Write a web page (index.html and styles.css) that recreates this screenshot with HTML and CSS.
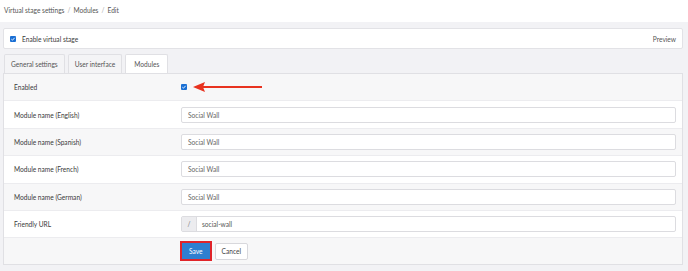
FILE: index.html
```html
<!DOCTYPE html>
<html lang="en">
<head>
  <meta charset="UTF-8">
  <title>Virtual stage settings - Modules - Edit</title>
  <link rel="stylesheet" href="styles.css">
</head>
<body>

  <div class="topbar">
    <span>Virtual stage settings</span><span class="sep">/</span><span>Modules</span><span class="sep">/</span><span>Edit</span>
  </div>

  <div class="main">
    <div class="stage-card">
      <label class="stage-toggle">
        <span class="check big"><svg viewBox="0 0 8 8"><path d="M1.8 4.2 L3.3 5.6 L6.2 2.4" fill="none" stroke="#fff" stroke-width="1.2"/></svg></span>
        Enable virtual stage
      </label>
      <span class="preview">Preview</span>
    </div>

    <div class="tabs">
      <div class="tab">General settings</div>
      <div class="tab">User interface</div>
      <div class="tab active">Modules</div>
    </div>

    <div class="panel">
      <div class="row">
        <div class="label">Enabled</div>
        <div class="field">
          <span class="check"><svg viewBox="0 0 8 8"><path d="M1.8 4.2 L3.3 5.6 L6.2 2.4" fill="none" stroke="#fff" stroke-width="1.2"/></svg></span>
          <svg class="arrow" width="72" height="12" viewBox="0 0 72 12">
            <path d="M10 6 H70" stroke="#e8321f" stroke-width="2"/>
            <path d="M1 6 L13 1 L11 6 L13 11 Z" fill="#e8321f"/>
          </svg>
        </div>
      </div>
      <div class="row">
        <div class="label">Module name (English)</div>
        <div class="field"><div class="input">Social Wall</div></div>
      </div>
      <div class="row">
        <div class="label">Module name (Spanish)</div>
        <div class="field"><div class="input">Social Wall</div></div>
      </div>
      <div class="row">
        <div class="label">Module name (French)</div>
        <div class="field"><div class="input">Social Wall</div></div>
      </div>
      <div class="row">
        <div class="label">Module name (German)</div>
        <div class="field"><div class="input">Social Wall</div></div>
      </div>
      <div class="row">
        <div class="label">Friendly URL</div>
        <div class="field">
          <div class="input-group">
            <span class="addon">/</span>
            <span class="input-text">social-wall</span>
          </div>
        </div>
      </div>
      <div class="row actions">
        <div class="label"></div>
        <div class="field">
          <span class="highlight"><button class="btn btn-primary">Save</button></span>
          <button class="btn">Cancel</button>
        </div>
      </div>
    </div>
  </div>

</body>
</html>
```

FILE: styles.css
```css
body {
  font-family: Lato, "Open Sans", sans-serif;
  font-size: 6.6px;
  color: #3a3a3a;
  background-color: #f2f2f5;
  margin: 0;
}

.topbar {
  background-color: #fff;
  height: 22px;
  line-height: 20px;
  padding-left: 4px;
  color: #555;
}

.topbar .sep {
  color: #aaa;
  margin: 0 3px;
}

.main {
  padding: 6px 5px 0 3px;
}

.stage-card {
  background-color: #fff;
  border: 1px solid #e2e2e6;
  border-radius: 2px;
  height: 19px;
  display: flex;
  align-items: center;
  justify-content: space-between;
  padding: 0 6px 0 6px;
}

.stage-toggle {
  display: flex;
  align-items: center;
  gap: 6px;
}

.preview {
  color: #555;
}

.check {
  width: 6px;
  height: 6px;
  background-color: #1a6fd4;
  border-radius: 1px;
  display: inline-flex;
}

.check svg {
  width: 100%;
  height: 100%;
}

.tabs {
  display: flex;
  gap: 3px;
  margin-top: 5px;
  padding-left: 1px;
}

.tab {
  height: 18px;
  line-height: 18px;
  padding: 0 6px;
  border: 1px solid #e0e0e4;
  border-bottom: none;
  border-radius: 2px 2px 0 0;
  background-color: #f4f4f6;
  color: #555;
}

.tab.active {
  background-color: #fff;
  padding: 0 8px;
}

.panel {
  border: 1px solid #e0e0e4;
  background-color: #f7f7f8;
  margin-bottom: 6px;
}

.row {
  display: grid;
  grid-template-columns: 177px 1fr;
  align-items: center;
  height: 27.4px;
  border-bottom: 1px solid #ececef;
  box-sizing: border-box;
}

.row:nth-child(even) {
  background-color: #fff;
}

.row:last-child {
  border-bottom: none;
  height: 26px;
}

.label {
  padding-left: 10px;
}

.field {
  display: flex;
  align-items: center;
  padding-right: 6px;
}

.arrow {
  margin-left: 5px;
}

.input {
  flex: 1;
  height: 16px;
  line-height: 15px;
  border: 1px solid #dcdce0;
  border-radius: 2px;
  background-color: #fff;
  padding-left: 6px;
  color: #666;
  box-sizing: border-box;
}

.input-group {
  flex: 1;
  display: flex;
  height: 16px;
  border: 1px solid #dcdce0;
  border-radius: 2px;
  background-color: #fff;
  box-sizing: border-box;
}

.addon {
  width: 14px;
  text-align: center;
  line-height: 14px;
  background-color: #ececef;
  border-right: 1px solid #dcdce0;
  color: #777;
}

.input-text {
  line-height: 14px;
  padding-left: 5px;
  color: #555;
}

.highlight {
  border: 2px solid #e0242a;
  display: inline-flex;
  margin-right: 3px;
  margin-left: -1px;
}

.btn {
  font-family: inherit;
  font-size: 6.6px;
  height: 17px;
  padding: 0 6px;
  border: 1px solid #d8d8dc;
  border-radius: 2px;
  background-color: #fff;
  color: #444;
}

.btn-primary {
  background-color: #2f7fd0;
  border: none;
  border-radius: 0;
  color: #fff;
  height: 16px;
  padding: 0 7px;
}
```
